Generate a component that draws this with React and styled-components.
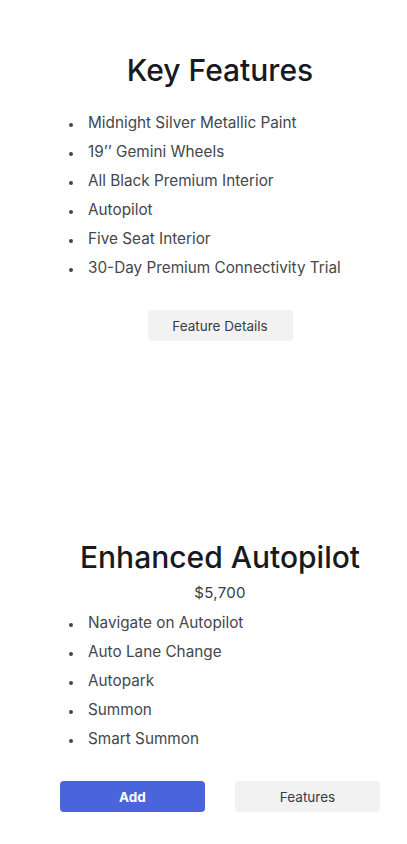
import React from 'react';
import styled, { createGlobalStyle } from 'styled-components';

const Global = createGlobalStyle`
  body {
    margin: 0;
    background: #fff;
    font-family: Inter, "Open Sans", "Liberation Sans", sans-serif;
  }
`

const Page = styled.div`
  width: 320px;
  padding: 52px 0 0 60px;
  display: flex;
  flex-direction: column;
`

const Section = styled.section`
  display: flex;
  flex-direction: column;
  align-items: center;
  margin-top: ${p => p.gap || 0}px;
`

const Title = styled.h2`
  margin: 0;
  font-size: 30px;
  line-height: 36px;
  font-weight: 500;
  color: #171a20;
`

const Price = styled.div`
  margin-top: 6px;
  font-size: 15px;
  line-height: 24px;
  font-weight: 400;
  letter-spacing: 0.3px;
  color: #393c41;
`

const List = styled.ul`
  align-self: stretch;
  margin: ${p => p.top}px 0 0;
  padding: 0 0 0 23px;
  list-style: disc;
  color: #44474c;
  font-size: 15.3px;
  line-height: 29px;
  li { padding-left: 5px; }
  li::marker { font-size: 11px; }
`

const Row = styled.div`
  align-self: stretch;
  display: flex;
  justify-content: ${p => p.spread ? 'space-between' : 'center'};
  margin-top: ${p => p.top}px;
`

const Button = styled.button`
  width: 145px;
  height: 31px;
  border: none;
  border-radius: 4px;
  font-family: inherit;
  font-size: 13.5px;
  font-weight: ${p => p.primary ? 700 : 400};
  background: ${p => p.primary ? '#4a64dc' : '#f2f2f2'};
  color: ${p => p.primary ? '#fff' : '#393c41'};
  cursor: pointer;
`

const keyFeatures = [
  'Midnight Silver Metallic Paint',
  '19’’ Gemini Wheels',
  'All Black Premium Interior',
  'Autopilot',
  'Five Seat Interior',
  '30-Day Premium Connectivity Trial',
]

const autopilot = [
  'Navigate on Autopilot',
  'Auto Lane Change',
  'Autopark',
  'Summon',
  'Smart Summon',
]

const App = () => {
  return (
    <Page>
      <Global />
      <Section>
        <Title>Key Features</Title>
        <List top={19.5}>
          {keyFeatures.map(f => <li key={f}>{f}</li>)}
        </List>
        <Row top={28.5}>
          <Button>Feature Details</Button>
        </Row>
      </Section>
      <Section gap={198}>
        <Title>Enhanced Autopilot</Title>
        <Price>$5,700</Price>
        <List top={2.5}>
          {autopilot.map(f => <li key={f}>{f}</li>)}
        </List>
        <Row spread top={28.5}>
          <Button primary>Add</Button>
          <Button>Features</Button>
        </Row>
      </Section>
    </Page>
  )
}

export default App
